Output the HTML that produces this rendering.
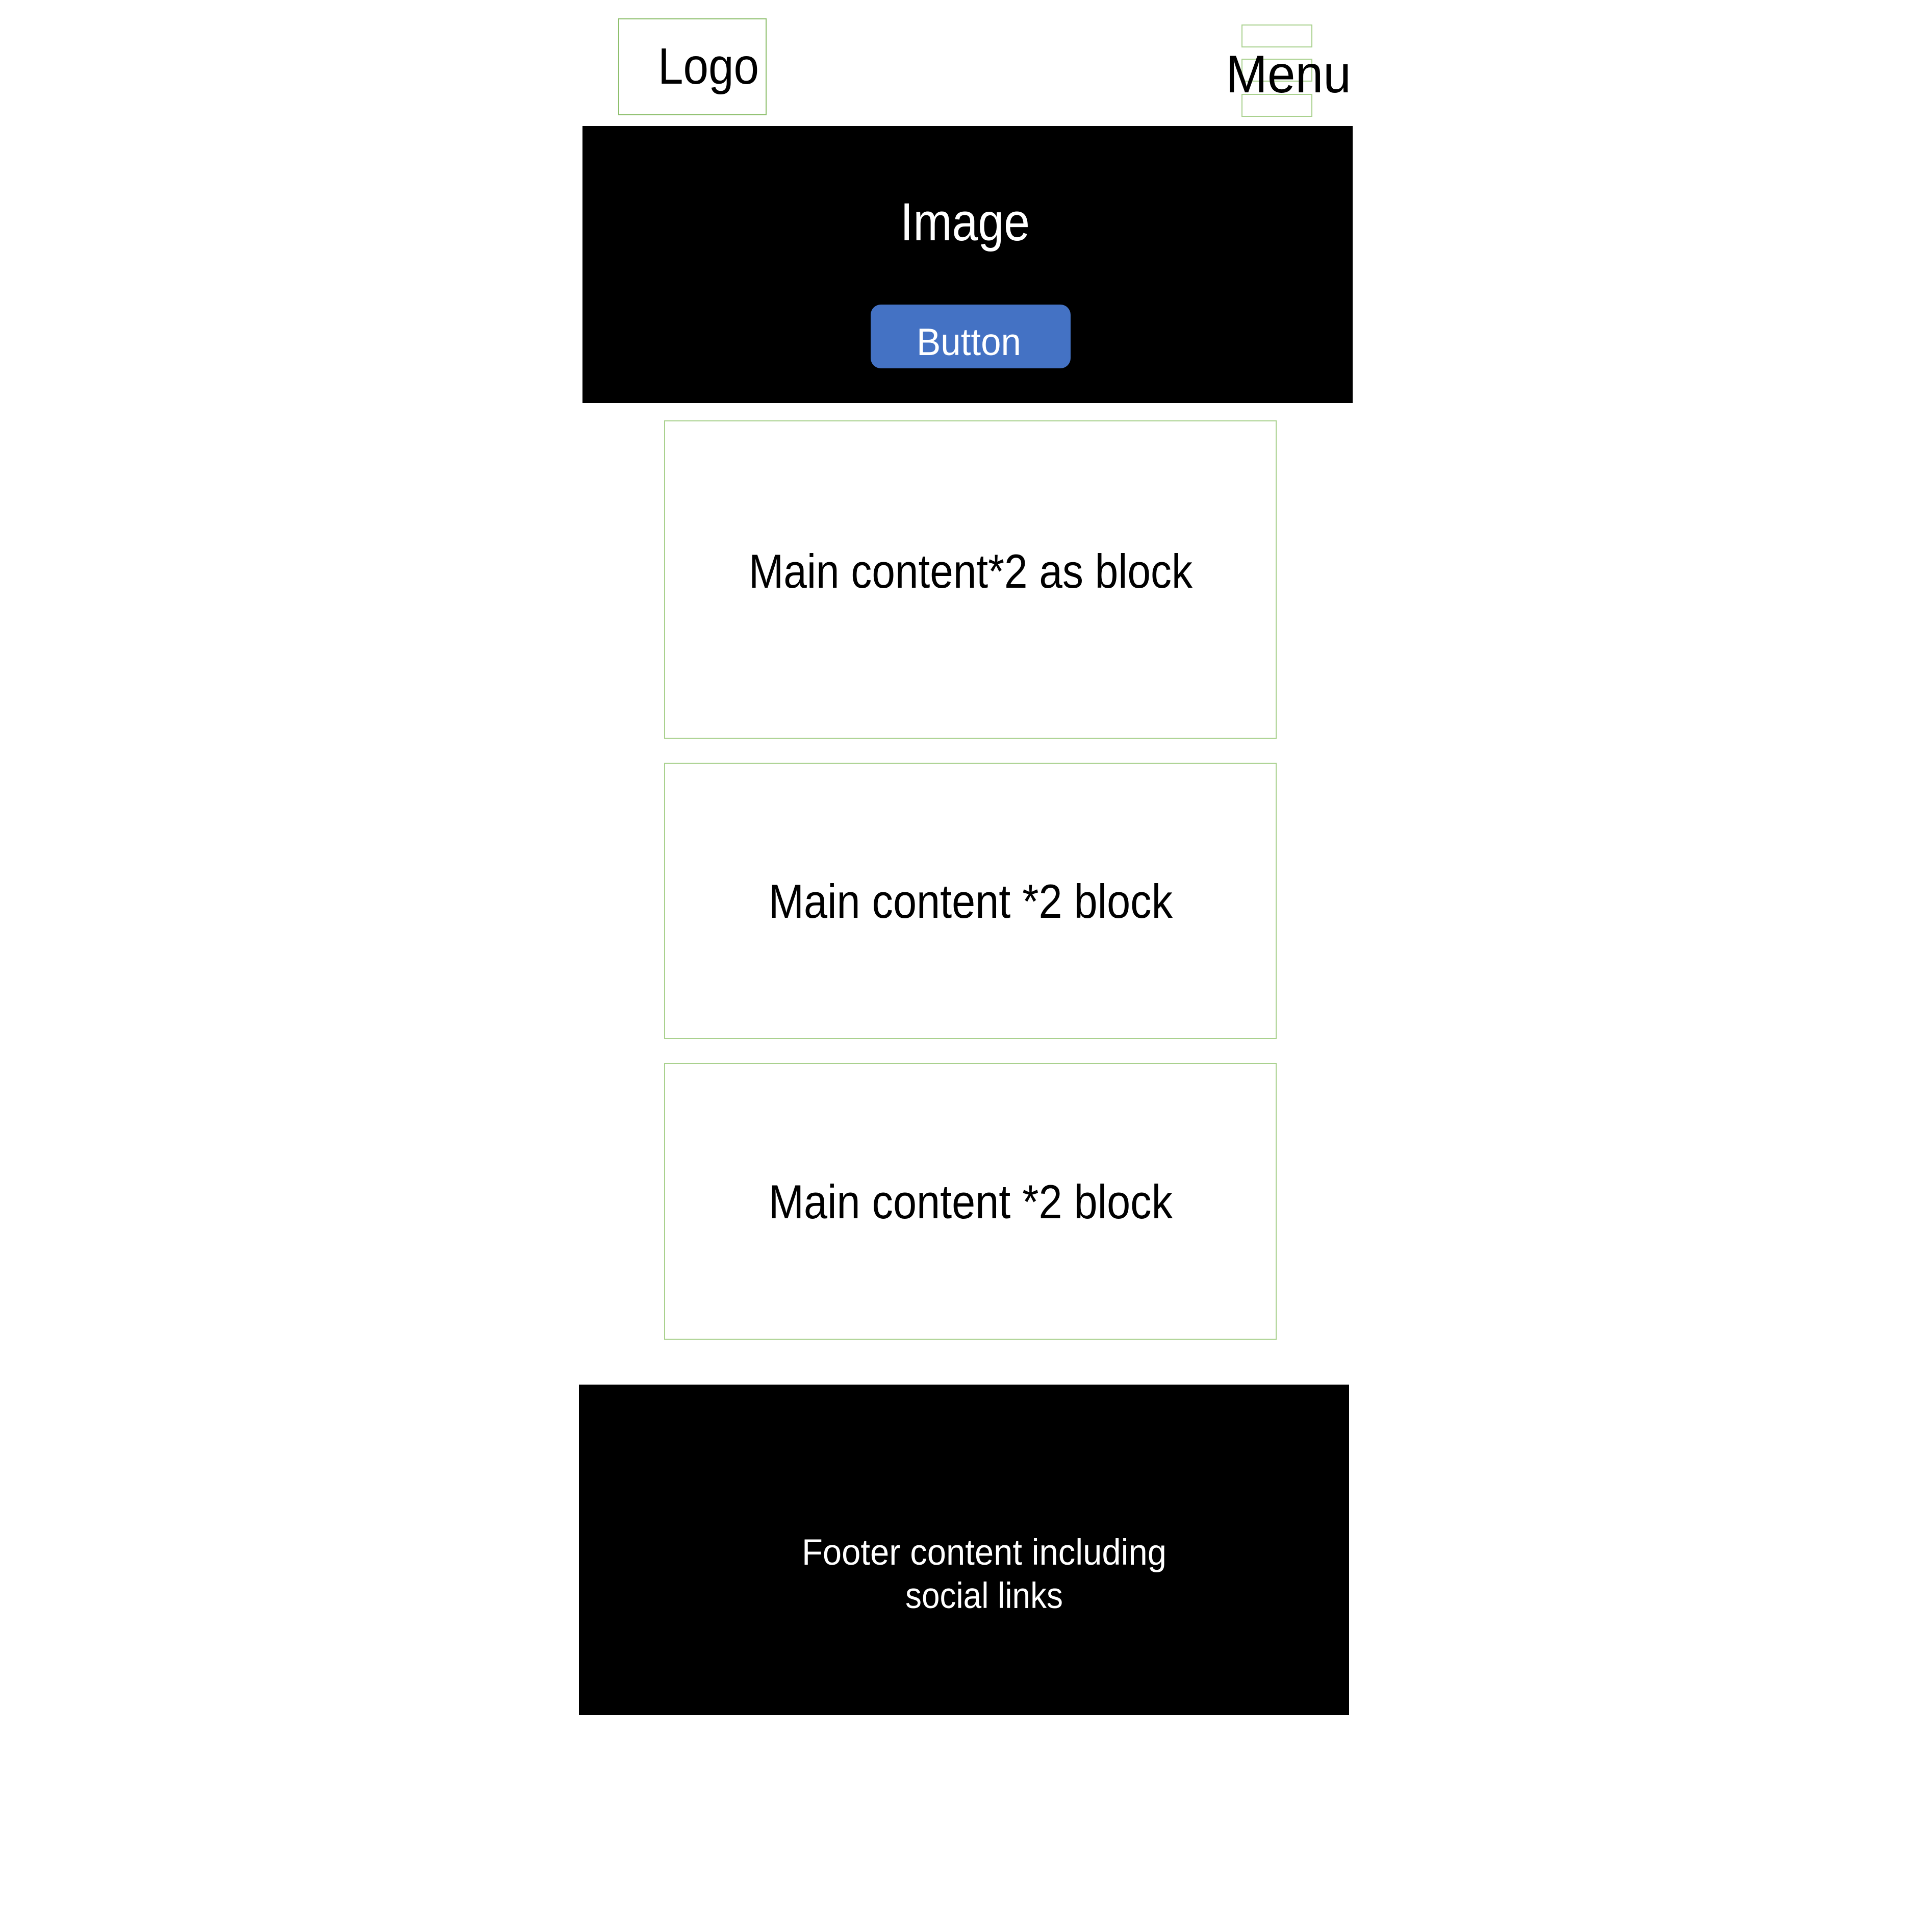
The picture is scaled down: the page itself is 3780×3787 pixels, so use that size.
<!DOCTYPE html>
<html><head><meta charset="utf-8"><style>
html,body{margin:0;padding:0;background:#fff;width:3780px;height:3787px;overflow:hidden}
svg{display:block}
text{font-family:"Liberation Sans",sans-serif}
</style></head><body>
<svg width="3780" height="3787" viewBox="0 0 3780 3787" xmlns="http://www.w3.org/2000/svg">
<rect width="3780" height="3787" fill="#fff"/>
<!-- Logo -->
<rect x="1213" y="37" width="289" height="188" fill="none" stroke="#8dbf6c" stroke-width="2"/>
<text x="1290" y="164" font-size="100" fill="#000" textLength="198" lengthAdjust="spacingAndGlyphs">Logo</text>
<!-- Menu boxes -->
<rect x="2435" y="49" width="137" height="43" fill="none" stroke="#a9d18e" stroke-width="2"/>
<rect x="2435" y="116" width="137" height="43" fill="none" stroke="#a9d18e" stroke-width="2"/>
<rect x="2435" y="185" width="137" height="43" fill="none" stroke="#a9d18e" stroke-width="2"/>
<text x="2403" y="181" font-size="104" fill="#000" textLength="246" lengthAdjust="spacingAndGlyphs">Menu</text>
<!-- Hero -->
<rect x="1142" y="247" width="1510" height="543" fill="#000"/>
<text x="1765" y="471" font-size="105" fill="#fff" textLength="254" lengthAdjust="spacingAndGlyphs">Image</text>
<rect x="1707" y="597" width="392" height="125" rx="20" fill="#4472c4"/>
<text x="1797" y="696" font-size="75" fill="#fff" textLength="205" lengthAdjust="spacingAndGlyphs">Button</text>
<!-- Content boxes -->
<rect x="1303" y="825" width="1199" height="622" fill="none" stroke="#a9d18e" stroke-width="2"/>
<text x="1468" y="1152" font-size="94" fill="#000" textLength="870" lengthAdjust="spacingAndGlyphs">Main content*2 as block</text>
<rect x="1303" y="1496" width="1199" height="540" fill="none" stroke="#a9d18e" stroke-width="2"/>
<text x="1507" y="1799" font-size="94" fill="#000" textLength="792" lengthAdjust="spacingAndGlyphs">Main content *2 block</text>
<rect x="1303" y="2085" width="1199" height="540" fill="none" stroke="#a9d18e" stroke-width="2"/>
<text x="1507" y="2388" font-size="94" fill="#000" textLength="792" lengthAdjust="spacingAndGlyphs">Main content *2 block</text>
<!-- Footer -->
<rect x="1135" y="2714" width="1510" height="648" fill="#000"/>
<text x="1572" y="3067" font-size="71" fill="#fff" textLength="715" lengthAdjust="spacingAndGlyphs">Footer content including</text>
<text x="1775" y="3152" font-size="71" fill="#fff" textLength="309" lengthAdjust="spacingAndGlyphs">social links</text>
</svg>
</body></html>
